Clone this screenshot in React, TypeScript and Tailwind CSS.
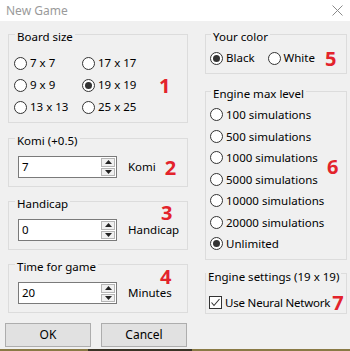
import type { ReactNode } from "react";

const Radio = ({ checked, label }: { checked?: boolean; label: string }) => (
  <div className="flex items-center gap-[3px] whitespace-nowrap">
    <span className="w-[13px] h-[13px] shrink-0 rounded-full border border-[#333333] bg-white flex items-center justify-center">
      {checked && <span className="w-[7px] h-[7px] rounded-full bg-[#333333]" />}
    </span>
    <span>{label}</span>
  </div>
);

const Group = ({
  title,
  legendClass = "ml-[6px]",
  className = "",
  children,
}: {
  title: string;
  legendClass?: string;
  className?: string;
  children: ReactNode;
}) => (
  <fieldset className={`border border-[#dcdcdc] p-0 m-0 min-w-0 ${className}`}>
    <legend className={`px-[2px] pt-[6px] leading-[14px] whitespace-nowrap ${legendClass}`}>{title}</legend>
    {children}
  </fieldset>
);

const Num = ({ n, className = "" }: { n: string; className?: string }) => (
  <span className={`text-[20px] leading-[15px] font-bold text-[#e3232b] ${className}`}>{n}</span>
);

const Arrow = ({ up }: { up?: boolean }) => (
  <svg width="7" height="4" viewBox="0 0 7 4">
    {up ? <polygon points="3.5,0 7,4 0,4" fill="#222" /> : <polygon points="0,0 7,0 3.5,4" fill="#222" />}
  </svg>
);

const Spin = ({ value }: { value: string }) => (
  <div className="w-[99px] h-[22px] border border-[#7a7a7a] bg-white flex">
    <div className="flex-1 pl-[3px] flex items-center">{value}</div>
    <div className="w-[15px] flex flex-col gap-[1px] p-[1px] pl-0">
      <div className="flex-1 bg-[#f0f0f0] border border-[#b5b5b5] flex items-center justify-center">
        <Arrow up />
      </div>
      <div className="flex-1 bg-[#f0f0f0] border border-[#b5b5b5] flex items-center justify-center">
        <Arrow />
      </div>
    </div>
  </div>
);

const App = () => {
  const levels = [
    "100 simulations",
    "500 simulations",
    "1000 simulations",
    "5000 simulations",
    "10000 simulations",
    "20000 simulations",
  ];

  return (
    <div className="w-[350px] h-[351px] bg-[#f0f0f0] flex flex-col font-['Noto_Sans',sans-serif] text-[11.5px] text-black overflow-hidden">
      <div className="h-[21px] bg-white flex items-center justify-between pl-[6px] pr-[7px]">
        <span className="text-[12px] text-[#9a9a9a]">New Game</span>
        <svg width="11" height="11" viewBox="0 0 11 11">
          <line x1="0.5" y1="0.5" x2="10.5" y2="10.5" stroke="#8a8a8a" strokeWidth="1" />
          <line x1="10.5" y1="0.5" x2="0.5" y2="10.5" stroke="#8a8a8a" strokeWidth="1" />
        </svg>
      </div>

      <div className="flex-1 flex pl-[5px] pt-[3px]">
        {/* left column */}
        <div className="w-[183px] flex flex-col">
          <Group title="Board size" className="ml-[3px]">
            <div className="flex items-center pl-[5px] pt-[8px] pb-[4px]">
              <div className="grid grid-cols-[68px_68px] auto-rows-[22px] items-center">
                <Radio label="7 x 7" />
                <Radio label="17 x 17" />
                <Radio label="9 x 9" />
                <Radio checked label="19 x 19" />
                <Radio label="13 x 13" />
                <Radio label="25 x 25" />
              </div>
              <Num n="1" className="ml-[9px]" />
            </div>
          </Group>

          <Group title="Komi (+0.5)" className="ml-[3px] mt-[5px]">
            <div className="flex items-center pl-[9px] pt-[8px] pb-[8px]">
              <Spin value="7" />
              <span className="ml-[11px]">Komi</span>
              <Num n="2" className="ml-[9px]" />
            </div>
          </Group>

          <Group title="Handicap" className="ml-[3px] mt-[4px]">
            <div className="flex items-center pl-[9px] pt-[8px] pb-[8px]">
              <Spin value="0" />
              <span className="ml-[11px] relative leading-[16px]">
                Handicap
                <Num n="3" className="absolute left-[33px] -top-[17px]" />
              </span>
            </div>
          </Group>

          <Group title="Time for game" className="ml-[3px] mt-[4px]">
            <div className="flex items-center pl-[9px] pt-[8px] pb-[8px]">
              <Spin value="20" />
              <span className="ml-[11px] relative leading-[16px]">
                Minutes
                <Num n="4" className="absolute left-[32px] -top-[16px]" />
              </span>
            </div>
          </Group>

          <div className="flex gap-[10px] mt-[10px]">
            <button className="w-[86px] h-[24px] bg-[#e1e1e1] border border-[#adadad] text-[12px]">OK</button>
            <button className="w-[86px] h-[24px] bg-[#e1e1e1] border border-[#adadad] text-[12px]">Cancel</button>
          </div>
        </div>

        {/* right column */}
        <div className="w-[142px] ml-[17px] flex flex-col">
          <Group title="Your color" legendClass="ml-[5px]">
            <div className="flex items-center h-[22px] pl-[4px] mt-[3px] mb-[4px]">
              <Radio checked label="Black" />
              <div className="ml-[13px]">
                <Radio label="White" />
              </div>
              <Num n="5" className="ml-[10px]" />
            </div>
          </Group>

          <Group title="Engine max level" legendClass="ml-[5px]" className="mt-[7px]">
            <div className="flex pl-[4px] pt-[3px] pb-[4px]">
              <div className="w-[117px] flex flex-col">
                {levels.map((l) => (
                  <div key={l} className="h-[21.5px] flex items-center">
                    <Radio label={l} />
                  </div>
                ))}
                <div className="h-[21.5px] flex items-center">
                  <Radio checked label="Unlimited" />
                </div>
              </div>
              <Num n="6" className="mt-[55px]" />
            </div>
          </Group>

          <Group title="Engine settings (19 x 19)" legendClass="ml-0" className="mt-[4px]">
            <div className="flex items-center h-[20px] pl-[3px] mt-[9px] whitespace-nowrap">
              <span className="w-[13px] h-[13px] shrink-0 border border-[#333333] bg-white flex items-center justify-center">
                <svg width="11" height="11" viewBox="0 0 11 11">
                  <polyline points="1.5,5.5 4,8.5 9.5,2" fill="none" stroke="#333" strokeWidth="1.1" />
                </svg>
              </span>
              <span className="ml-[3px] tracking-[-0.2px]">Use Neural Network</span>
              <Num n="7" className="ml-[2px]" />
            </div>
          </Group>
        </div>
      </div>

      <div className="h-[2px] flex">
        <div className="w-[88px] bg-[#8a7a45]" />
        <div className="w-[104px] bg-[#3a3426]" />
        <div className="flex-1 bg-[#8a7a45]" />
      </div>
    </div>
  );
};

export default App;
